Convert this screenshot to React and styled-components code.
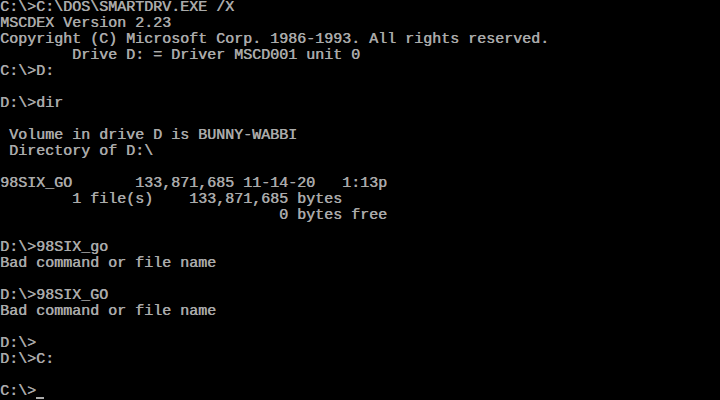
import styled, { createGlobalStyle } from "styled-components";

const GlobalStyle = createGlobalStyle`
    html, body {
        margin: 0;
        padding: 0;
        background: #000;
    }
`;

const lines = [
    "C:\\>C:\\DOS\\SMARTDRV.EXE /X",
    "MSCDEX Version 2.23",
    "Copyright (C) Microsoft Corp. 1986-1993. All rights reserved.",
    "        Drive D: = Driver MSCD001 unit 0",
    "C:\\>D:",
    "",
    "D:\\>dir",
    "",
    " Volume in drive D is BUNNY-WABBI",
    " Directory of D:\\",
    "",
    "98SIX_GO       133,871,685 11-14-20   1:13p",
    "        1 file(s)    133,871,685 bytes",
    "                               0 bytes free",
    "",
    "D:\\>98SIX_go",
    "Bad command or file name",
    "",
    "D:\\>98SIX_GO",
    "Bad command or file name",
    "",
    "D:\\>",
    "D:\\>C:",
    "",
];

export default function App() {
    return (
        <>
            <GlobalStyle />
            <Screen>
                {lines.map((text, i) => (
                    <Line key={i}>{text}</Line>
                ))}
                <Line>
                    C:\&gt;<Cursor />
                </Line>
            </Screen>
        </>
    );
}

const Screen = styled.div`
    width: 720px;
    height: 400px;
    background: #000;
    color: #aaaaaa;
    font-family: "Liberation Mono", "DejaVu Sans Mono", monospace;
    font-size: 15px;
    line-height: 16px;
    overflow: hidden;
    text-shadow: 0.4px 0 0 #aaaaaa;
`;

const Line = styled.div`
    height: 16px;
    white-space: pre;
`;

const Cursor = styled.span`
    display: inline-block;
    width: 9px;
    height: 16px;
    vertical-align: top;
    position: relative;

    &::after {
        content: "";
        position: absolute;
        left: 0;
        right: 1px;
        top: 13px;
        height: 2px;
        background: #aaaaaa;
    }
`;
